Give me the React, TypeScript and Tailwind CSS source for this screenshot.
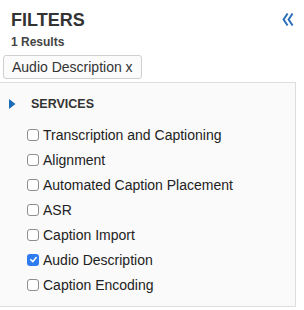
import React from "react";

const items = [
  { label: "Transcription and Captioning", checked: false },
  { label: "Alignment", checked: false },
  { label: "Automated Caption Placement", checked: false },
  { label: "ASR", checked: false },
  { label: "Caption Import", checked: false },
  { label: "Audio Description", checked: true },
  { label: "Caption Encoding", checked: false },
];

function Box({ checked }: { checked: boolean }) {
  if (checked) {
    return (
      <span className="flex h-[12px] w-[12px] items-center justify-center rounded-[3px] bg-[#2f7cf0]">
        <svg width="9" height="9" viewBox="0 0 10 10">
          <path d="M2 5.2 L4.2 7.4 L8 2.8" fill="none" stroke="#fff" strokeWidth="1.7" strokeLinecap="round" strokeLinejoin="round" />
        </svg>
      </span>
    );
  }
  return <span className="h-[12px] w-[12px] rounded-[3px] border border-[#8e8e8e] bg-white" />;
}

export default function App() {
  return (
    <div
      className="h-[310px] w-[304px] bg-white text-[#333]"
      style={{ fontFamily: '"Liberation Sans", Arial, Helvetica, sans-serif' }}
    >
      <div className="flex items-start justify-between pt-[10px]">
        <div className="pl-[11px]">
          <div className="text-[18px] font-bold leading-[20px] text-[#333]">FILTERS</div>
          <div className="mt-[5px] text-[12px] font-bold leading-[14px] text-[#444]">1 Results</div>
        </div>
        <svg className="mr-[10px] mt-[2px]" width="12" height="15" viewBox="0 0 12 15">
          <path d="M5.6 1.5 L1.6 7.5 L5.6 13.5" fill="none" stroke="#2a6ebb" strokeWidth="2" />
          <path d="M10.6 1.5 L6.6 7.5 L10.6 13.5" fill="none" stroke="#2a6ebb" strokeWidth="2" />
        </svg>
      </div>
      <div className="ml-[3px] mt-[6px] inline-flex h-[24px] items-center rounded-[3px] border border-[#cfcfcf] bg-[#fbfbfb] px-[8px] text-[14px] leading-[16px] text-[#333]">
        Audio Description x
      </div>
      <div className="mt-[3px] w-[296px] border-b border-r border-t border-[#dedede] bg-[#fafafa] pb-[9px] pt-[11px]">
        <div className="flex h-[20px] items-center">
          <svg className="ml-[9px]" width="7" height="10" viewBox="0 0 7 10">
            <path d="M0 0 L6.5 5 L0 10 Z" fill="#1b6cb5" />
          </svg>
          <span className="ml-[15px] text-[12.5px] font-bold text-[#333]">SERVICES</span>
        </div>
        <div className="mt-[8px] flex flex-col">
          {items.map((it) => (
            <label key={it.label} className="flex h-[25px] items-center pl-[27px]">
              <Box checked={it.checked} />
              <span className="ml-[4px] text-[14px] leading-[16px] text-[#222]">{it.label}</span>
            </label>
          ))}
        </div>
      </div>
    </div>
  );
}
